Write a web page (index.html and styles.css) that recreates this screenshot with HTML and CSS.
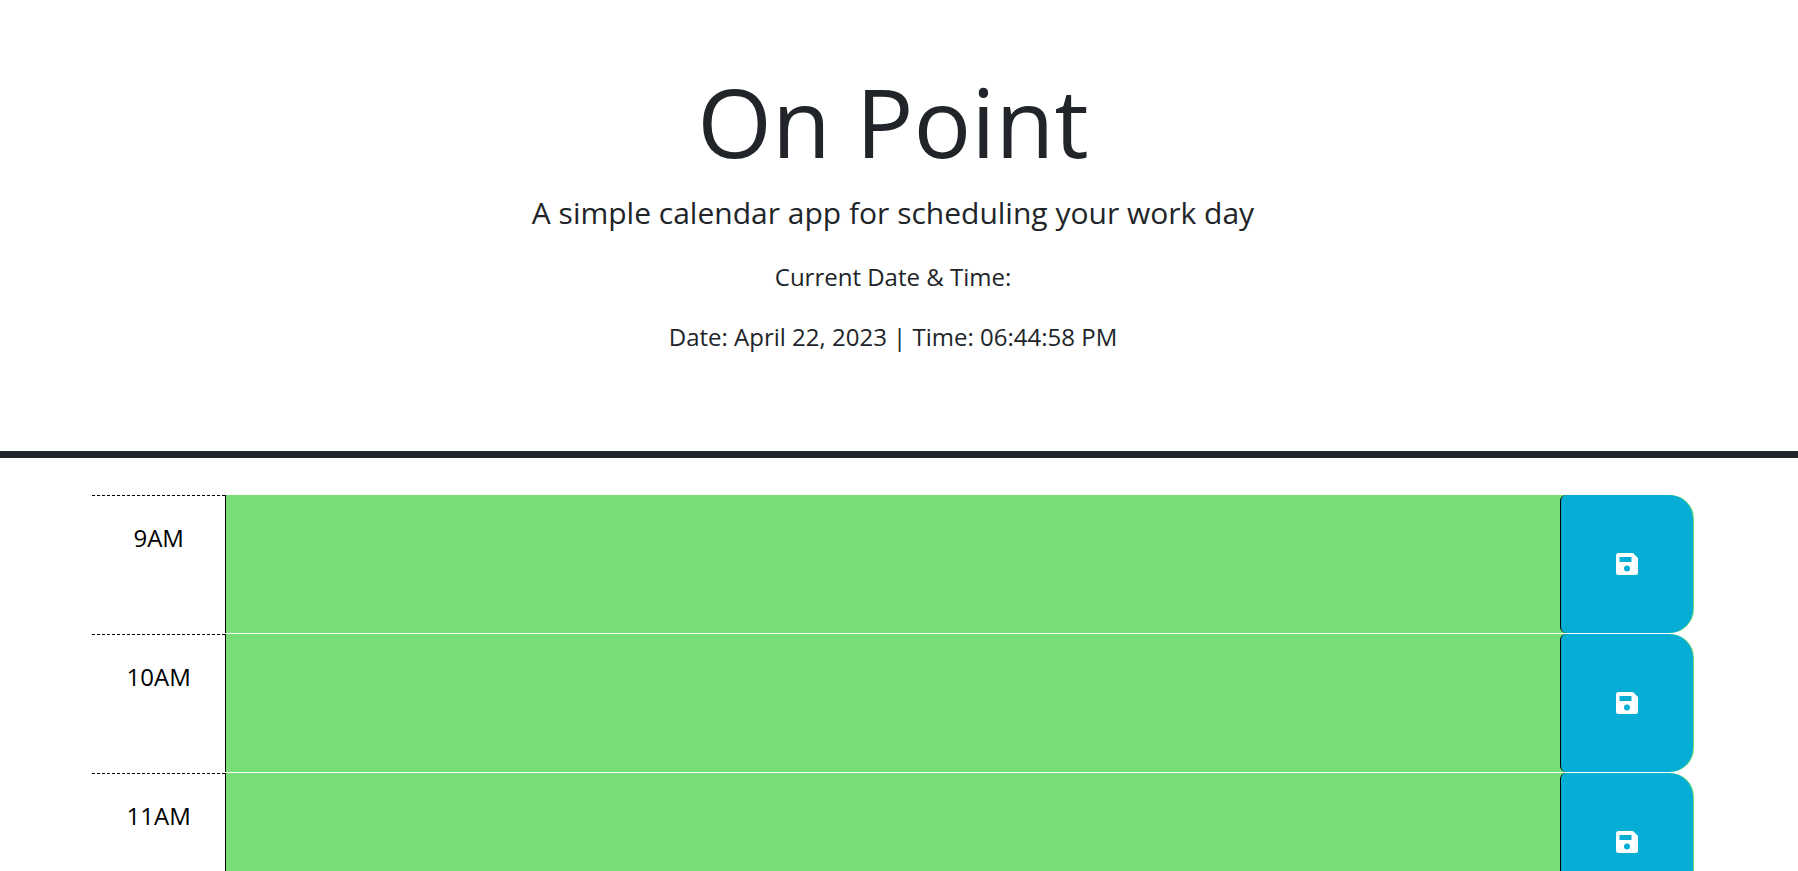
FILE: index.html
```html
<!DOCTYPE html>
<html lang="en">
<head>
<meta charset="utf-8">
<meta name="viewport" content="width=device-width, initial-scale=1">
<title>On Point</title>
<link rel="stylesheet" href="styles.css">
</head>
<body>
<svg class="sprite" aria-hidden="true">
  <symbol id="save" viewBox="0 0 22 22">
    <path fill-rule="evenodd" d="M2.500 0H17L22 5V19.500a2.500 2.500 0 0 1-2.500 2.500H2.500A2.500 2.500 0 0 1 0 19.500V2.500A2.500 2.500 0 0 1 2.500 0ZM3.500 4V9H15.500V4ZM11 12.500a3 3 0 1 0 0 6a3 3 0 1 0 0-6Z"/>
  </symbol>
</svg>
<header class="header">
  <h1 class="title">On Point</h1>
  <p class="lead">A simple calendar app for scheduling your work day</p>
  <p class="now">Current Date &amp; Time:</p>
  <p class="now">Date: April 22, 2023 | Time: 06:44:58 PM</p>
</header>
<main class="schedule">
  <section class="time-block">
    <label class="hour" for="hour-9">9AM</label>
    <textarea class="description" id="hour-9"></textarea>
    <button class="save" type="button" aria-label="Save 9AM"><svg class="icon"><use href="#save"/></svg></button>
  </section>
  <section class="time-block">
    <label class="hour" for="hour-10">10AM</label>
    <textarea class="description" id="hour-10"></textarea>
    <button class="save" type="button" aria-label="Save 10AM"><svg class="icon"><use href="#save"/></svg></button>
  </section>
  <section class="time-block">
    <label class="hour" for="hour-11">11AM</label>
    <textarea class="description" id="hour-11"></textarea>
    <button class="save" type="button" aria-label="Save 11AM"><svg class="icon"><use href="#save"/></svg></button>
  </section>
</main>
</body>
</html>
```
FILE: styles.css
```css
*, *::before, *::after { box-sizing: border-box; }

html { scrollbar-width: none; }

body {
  margin: 0;
  background: #fff;
  color: #212529;
  font-family: "Open Sans", sans-serif;
  font-size: 24px;
  line-height: 36px;
}

.sprite { display: none; }

.header {
  padding: 63px 12px 72px 0;
  border-bottom: 7px solid #212529;
  text-align: center;
}

.title {
  margin: 0 0 11px;
  font-size: 96px;
  font-weight: 400;
  line-height: 116px;
}

.lead {
  margin: 0 0 24px;
  font-size: 30px;
  font-weight: 400;
  line-height: 45px;
}

.now { margin: 0 0 24px; }

.schedule { padding: 36px 104px 0 92px; }

.time-block {
  display: grid;
  grid-template-columns: 1fr 10fr 1fr;
  height: 139px;
  padding-right: 1px;
  border-top: 1px solid #fff;
  border-radius: 0 24px 24px 0;
  background: #77dd77;
}

.hour {
  padding-top: 24px;
  border-top: 1px dashed #000;
  background: #fff;
  color: #000;
  text-align: center;
}

.description {
  width: 100%;
  height: 100%;
  padding: 8px;
  border: 0;
  border-left: 1px solid #000;
  background: #77dd77;
  color: #000;
  font: inherit;
  resize: none;
  outline: 0;
}

.save {
  display: flex;
  align-items: center;
  justify-content: center;
  padding: 0;
  border: 0;
  border-left: 1px solid #000;
  border-radius: 6px 24px 24px 6px;
  background: #06aed5;
  color: #fff;
  cursor: pointer;
}

.icon {
  width: 22px;
  height: 22px;
  fill: currentColor;
}
```
